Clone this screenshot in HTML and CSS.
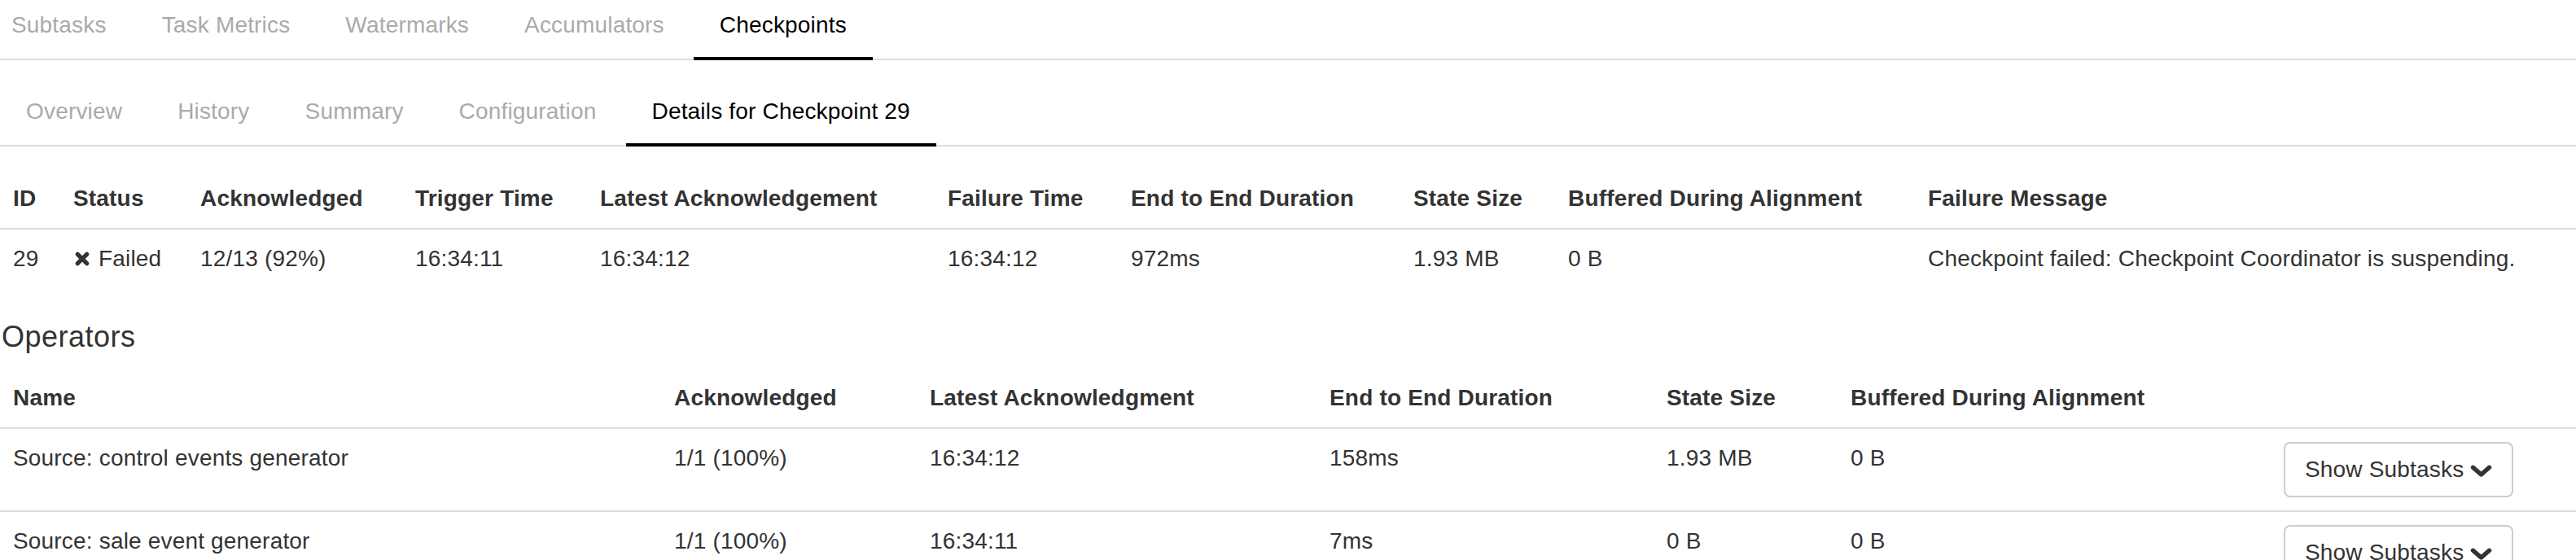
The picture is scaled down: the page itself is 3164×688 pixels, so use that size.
FILE: index.html
```html
<!DOCTYPE html>
<html lang="en">
<head>
<meta charset="utf-8">
<title>Checkpoint 29</title>
<link rel="stylesheet" href="styles.css">
</head>
<body>
<nav class="tabs tabs-main">
  <a class="tab">Subtasks</a>
  <a class="tab">Task Metrics</a>
  <a class="tab">Watermarks</a>
  <a class="tab">Accumulators</a>
  <a class="tab active">Checkpoints</a>
</nav>
<nav class="tabs tabs-sub">
  <a class="tab">Overview</a>
  <a class="tab">History</a>
  <a class="tab">Summary</a>
  <a class="tab">Configuration</a>
  <a class="tab active">Details for Checkpoint 29</a>
</nav>

<table class="table table-summary">
  <colgroup>
    <col class="s-id"><col class="s-status"><col class="s-ack"><col class="s-trigger"><col class="s-latest"><col class="s-fail"><col class="s-e2e"><col class="s-size"><col class="s-buf"><col>
  </colgroup>
  <thead>
    <tr>
      <th>ID</th><th>Status</th><th>Acknowledged</th><th>Trigger Time</th><th>Latest Acknowledgement</th><th>Failure Time</th><th>End to End Duration</th><th>State Size</th><th>Buffered During Alignment</th><th>Failure Message</th>
    </tr>
  </thead>
  <tbody>
    <tr>
      <td>29</td>
      <td><svg class="icon-x" viewBox="0 0 18 18" aria-hidden="true"><path d="M3.3 3.3 L14.7 14.7 M14.7 3.3 L3.3 14.7"/></svg> Failed</td>
      <td>12/13 (92%)</td>
      <td>16:34:11</td>
      <td>16:34:12</td>
      <td>16:34:12</td>
      <td>972ms</td>
      <td>1.93 MB</td>
      <td>0 B</td>
      <td>Checkpoint failed: Checkpoint Coordinator is suspending.</td>
    </tr>
  </tbody>
</table>

<h4 class="section-title">Operators</h4>

<table class="table table-operators">
  <colgroup>
    <col class="o-name"><col class="o-ack"><col class="o-latest"><col class="o-e2e"><col class="o-size"><col class="o-buf"><col>
  </colgroup>
  <thead>
    <tr>
      <th>Name</th><th>Acknowledged</th><th>Latest Acknowledgment</th><th>End to End Duration</th><th>State Size</th><th>Buffered During Alignment</th><th></th>
    </tr>
  </thead>
  <tbody>
    <tr>
      <td>Source: control events generator</td>
      <td>1/1 (100%)</td>
      <td>16:34:12</td>
      <td>158ms</td>
      <td>1.93 MB</td>
      <td>0 B</td>
      <td><button class="btn" type="button">Show Subtasks <svg class="chev" viewBox="0 0 27 15" aria-hidden="true"><path d="M3.5 3.3 L13.5 12 L23.5 3.3"/></svg></button></td>
    </tr>
    <tr>
      <td>Source: sale event generator</td>
      <td>1/1 (100%)</td>
      <td>16:34:11</td>
      <td>7ms</td>
      <td>0 B</td>
      <td>0 B</td>
      <td><button class="btn" type="button">Show Subtasks <svg class="chev" viewBox="0 0 27 15" aria-hidden="true"><path d="M3.5 3.3 L13.5 12 L23.5 3.3"/></svg></button></td>
    </tr>
  </tbody>
</table>
</body>
</html>
```

FILE: styles.css
```css
html, body {
  margin: 0;
  padding: 0;
  overflow: hidden;
  background: #fff;
}

body {
  font-family: "Liberation Sans", Arial, Helvetica, sans-serif;
  font-size: 28px;
  line-height: 40px;
  letter-spacing: 0.18px;
  color: #333;
}

/* ---------- tabs ---------- */
.tabs {
  display: flex;
  border-bottom: 2px solid #ddd;
}

.tab {
  display: block;
  padding: 11px 32px 19px;
  margin: 0 4px -2px 0;
  border-bottom: 4px solid transparent;
  color: #aaa;
  text-decoration: none;
  white-space: nowrap;
}

.tab.active {
  color: #000;
  border-bottom-color: #000;
}

.tabs-main .tab:first-child {
  padding-left: 14px;
}

.tabs-sub {
  margin-top: 32px;
}

/* ---------- tables ---------- */
.table {
  width: 100%;
  table-layout: fixed;
  border-collapse: separate;
  border-spacing: 0;
}

.table th,
.table td {
  padding: 16px;
  text-align: left;
  vertical-align: top;
  white-space: nowrap;
}

.table th {
  font-weight: bold;
  border-bottom: 2px solid #ddd;
}

.table tbody tr + tr td {
  border-top: 2px solid #ddd;
}

.table-summary {
  margin-top: 28px;
}

.s-id { width: 74px; }
.s-status { width: 156px; }
.s-ack { width: 264px; }
.s-trigger { width: 227px; }
.s-latest { width: 427px; }
.s-fail { width: 225px; }
.s-e2e { width: 347px; }
.s-size { width: 190px; }
.s-buf { width: 442px; }

.o-name { width: 812px; }
.o-ack { width: 314px; }
.o-latest { width: 491px; }
.o-e2e { width: 414px; }
.o-size { width: 226px; }
.o-buf { width: 532px; }

/* ---------- heading ---------- */
.section-title {
  font-size: 36px;
  line-height: 39.6px;
  letter-spacing: 0.5px;
  font-weight: normal;
  color: #333;
  margin: 40px 0 19px 2px;
}

/* ---------- icons ---------- */
.icon-x {
  width: 18px;
  height: 18px;
  margin: 0 3px 0 2px;
  vertical-align: baseline;
}

.icon-x path {
  fill: none;
  stroke: #333;
  stroke-width: 5.2;
  stroke-linecap: round;
}

/* ---------- button ---------- */
.btn {
  display: inline-block;
  padding: 12px 24px;
  border: 2px solid #ccc;
  border-radius: 8px;
  background: #fff;
  color: #333;
  font-family: inherit;
  font-size: 28px;
  line-height: 40px;
  letter-spacing: 0.18px;
  white-space: nowrap;
  cursor: pointer;
}

.chev {
  width: 27px;
  height: 15px;
  vertical-align: baseline;
}

.chev path {
  fill: none;
  stroke: #333;
  stroke-width: 5.5;
  stroke-linecap: round;
  stroke-linejoin: round;
}
```
